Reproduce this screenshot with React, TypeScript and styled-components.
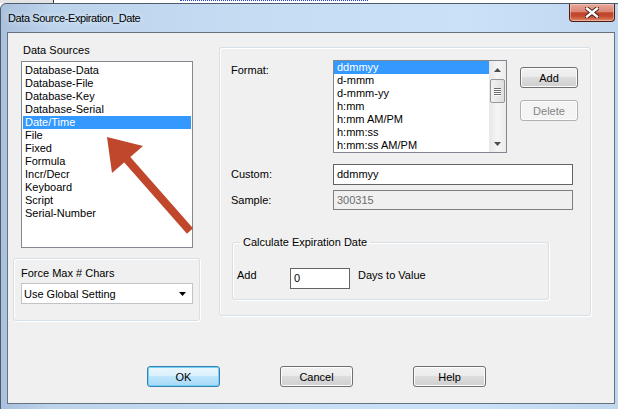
import React from 'react'
import styled, { createGlobalStyle } from 'styled-components'

/**
 * global
 */
const GlobalStyle = createGlobalStyle`
  html, body {
    margin: 0;
    padding: 0;
    background: #fff;
    overflow: hidden;
  }
  body {
    font-family: "Liberation Sans", Arial, sans-serif;
    font-size: 11px;
    color: #000;
  }
`

const UI_FONT = `"Liberation Sans", Arial, sans-serif`

/**
 * styled
 */
const Screen = styled.div`
  position: relative;
  width: 618px;
  height: 409px;
  overflow: hidden;
`

const Backdrop = styled.div`
  display: flex;
  height: 3px;
  background: #fff;
`

const BackdropGrey = styled.div`
  width: 53px;
  background: #e4e4e4;
  border-right: 1px solid #3a3a3a;
`

const BackdropDots = styled.div`
  margin-left: 126px;
  width: 188px;
  border-top: 1px dotted #1b3fd4;
`

const Window = styled.div`
  width: 623px;
  height: 410px;
  box-sizing: border-box;
  border: 1px solid #4f5c6c;
  border-radius: 6px 6px 0 0;
  background: linear-gradient(to right, #a9c1dc 0%, #bcd3ec 8%, #c6dcf3 40%, #cbe1f8 75%, #bfd6ef 100%);
  padding: 0 7px 8px 6px;
  display: flex;
  flex-direction: column;
`

const TitleBar = styled.div`
  height: 28px;
  display: flex;
  justify-content: space-between;
`

const Title = styled.span`
  align-self: center;
  padding-left: 1px;
  font-family: ${UI_FONT};
  font-size: 11px;
  letter-spacing: -0.4px;
  color: #000;
  text-shadow: 0 0 6px rgba(255, 255, 255, 0.9);
`

const CloseButton = styled.div`
  width: 46px;
  height: 18px;
  box-sizing: border-box;
  border: 1px solid #4a1c12;
  border-top: none;
  border-radius: 0 0 4px 4px;
  background: linear-gradient(#e8a898 0%, #d98874 45%, #c2432b 52%, #c54a31 72%, #de8a6b 100%);
  box-shadow: inset 0 0 0 1px rgba(255, 220, 210, 0.5);
  display: flex;
  align-items: center;
  justify-content: center;
`

const Client = styled.div`
  flex: 1;
  border: 1px solid #66727f;
  background: #f0f0f0;
  display: flex;
  flex-direction: column;
`

const MainRow = styled.div`
  display: flex;
  align-items: flex-start;
  gap: 19px;
  padding-left: 5px;
`

const SourcesColumn = styled.div`
  width: 187px;
  margin-top: 11px;
  display: flex;
  flex-direction: column;
`

const Caption = styled.div<{ $indent?: number }>`
  line-height: 13px;
  height: 13px;
  margin-left: ${(p) => p.$indent ?? 0}px;
  white-space: nowrap;
`

const ListBox = styled.div<{ $width: number; $height: number; $padTop?: number }>`
  position: relative;
  width: ${(p) => p.$width}px;
  height: ${(p) => p.$height}px;
  box-sizing: border-box;
  border: 1px solid #828790;
  background: #fff;
  padding: ${(p) => p.$padTop ?? 0}px 1px 0 1px;
  overflow: hidden;
`

const SourceList = styled(ListBox)`
  margin: 4px 0 0 8px;
`

const FormatList = styled(ListBox)`
  display: flex;
  padding: 0;
`

const FormatRows = styled.div`
  flex: 1;
`

const ListItem = styled.div<{ $selected?: boolean }>`
  height: 13px;
  line-height: 13px;
  padding-left: 2px;
  white-space: nowrap;
  background: ${(p) => (p.$selected ? '#3399ff' : 'transparent')};
  color: ${(p) => (p.$selected ? '#fff' : '#000')};
`

const FormatItem = styled(ListItem)`
  padding-left: 3px;
`

const ScrollBar = styled.div`
  width: 17px;
  display: flex;
  flex-direction: column;
  background: linear-gradient(to right, #e7e7e7, #f5f5f5 50%, #ececec);
`

const ScrollArrow = styled.div`
  height: 17px;
  display: flex;
  align-items: center;
  justify-content: center;
`

const ScrollTrack = styled.div`
  flex: 1;
  padding-top: 1px;
`

const ScrollThumb = styled.div`
  margin: 0 1px;
  height: 24px;
  box-sizing: border-box;
  border: 1px solid #979797;
  border-radius: 2px;
  background: linear-gradient(to right, #f2f2f2, #dedede);
  display: flex;
  flex-direction: column;
  align-items: center;
  justify-content: center;
  gap: 1px;
`

const Grip = styled.div`
  width: 7px;
  height: 1px;
  background: #6c6c6c;
  box-shadow: 0 1px 0 #fff;
`

const GroupBox = styled.div`
  box-sizing: border-box;
  border: 1px solid #d5dfe5;
  border-radius: 3px;
  box-shadow: inset 1px 1px 0 #fff, 1px 1px 0 #fff;
`

const ForceGroup = styled(GroupBox)`
  margin-top: 10px;
  width: 187px;
  height: 63px;
  padding: 8px 0 0 7px;
`

const Combo = styled.div`
  margin-top: 3px;
  width: 172px;
  height: 21px;
  box-sizing: border-box;
  border: 1px solid #c3c3c3;
  background: #fff;
  display: flex;
  align-items: center;
  justify-content: space-between;
  padding: 0 6px 0 2px;
`

const SettingsGroup = styled(GroupBox)`
  margin-top: 14px;
  width: 372px;
  height: 269px;
  padding: 12px 0 0 11px;
  display: flex;
  flex-direction: column;
`

const FormatRow = styled.div`
  display: flex;
  align-items: flex-start;
`

const FieldLabel = styled.div<{ $top?: number }>`
  width: 102px;
  line-height: 13px;
  margin-top: ${(p) => p.$top ?? 0}px;
  flex-shrink: 0;
`

const ButtonStack = styled.div`
  margin-left: 13px;
  padding-top: 7px;
  display: flex;
  flex-direction: column;
  gap: 12px;
`

const Button = styled.button<{ $width?: number; $primary?: boolean }>`
  width: ${(p) => p.$width ?? 73}px;
  height: 21px;
  box-sizing: border-box;
  padding: 0;
  font-family: ${UI_FONT};
  font-size: 11px;
  color: #000;
  border: 1px solid ${(p) => (p.$primary ? '#3c7fb1' : '#707070')};
  border-radius: 3px;
  background: ${(p) =>
    p.$primary
      ? 'linear-gradient(#eaf6fd 0%, #d9f0fc 49%, #bee6fd 50%, #a7d9f5 100%)'
      : 'linear-gradient(#f2f2f2 0%, #ebebeb 49%, #dddddd 50%, #cfcfcf 100%)'};
  box-shadow: inset 0 0 0 1px ${(p) => (p.$primary ? '#6fd3f7' : '#fcfcfc')};

  &:disabled {
    border-color: #adb2b5;
    background: #f4f4f4;
    color: #838383;
    box-shadow: inset 0 0 0 1px #fcfcfc;
  }
`

const FieldRow = styled.div<{ $top: number }>`
  display: flex;
  align-items: center;
  margin-top: ${(p) => p.$top}px;
`

const TextBox = styled.div<{ $width: number; $height: number; $disabled?: boolean }>`
  width: ${(p) => p.$width}px;
  height: ${(p) => p.$height}px;
  box-sizing: border-box;
  border: 1px solid ${(p) => (p.$disabled ? '#7f7f7f' : '#646464')};
  background: ${(p) => (p.$disabled ? '#f0f0f0' : '#fff')};
  color: ${(p) => (p.$disabled ? '#6d6d6d' : '#000')};
  padding-left: 3px;
  line-height: ${(p) => p.$height - 2}px;
  white-space: nowrap;
`

const CalcGroup = styled.fieldset`
  margin: 26px 0 0 1px;
  width: 317px;
  height: 64px;
  box-sizing: border-box;
  border: 1px solid #d5dfe5;
  border-radius: 3px;
  box-shadow: inset 1px 1px 0 #fff, 1px 1px 0 #fff;
  padding: 0;
  min-width: 0;
`

const CalcLegend = styled.legend`
  margin-left: 7px;
  padding: 0 3px;
  line-height: 13px;
  font-size: 11px;
`

const CalcRow = styled.div`
  display: flex;
  align-items: flex-start;
  margin-top: 19px;
  padding-left: 4px;
`

const InlineLabel = styled.div<{ $width?: number; $gap?: number }>`
  width: ${(p) => (p.$width ? `${p.$width}px` : 'auto')};
  margin: 1px 0 0 ${(p) => p.$gap ?? 0}px;
  line-height: 13px;
`

const ButtonRow = styled.div`
  margin-top: auto;
  padding: 0 0 16px 139px;
  display: flex;
  gap: 60px;
`

const ArrowOverlay = styled.svg`
  position: absolute;
  left: 0;
  top: 0;
  width: 618px;
  height: 409px;
  pointer-events: none;
`

/**
 * data
 */
const sources = [
  'Database-Data',
  'Database-File',
  'Database-Key',
  'Database-Serial',
  'Date/Time',
  'File',
  'Fixed',
  'Formula',
  'Incr/Decr',
  'Keyboard',
  'Script',
  'Serial-Number',
]

const formats = [
  'ddmmyy',
  'd-mmm',
  'd-mmm-yy',
  'h:mm',
  'h:mm AM/PM',
  'h:mm:ss',
  'h:mm:ss AM/PM',
]

const App: React.FC = () => {
  return (
    <Screen>
      <GlobalStyle />
      <Backdrop>
        <BackdropGrey />
        <BackdropDots />
      </Backdrop>
      <Window>
        <TitleBar>
          <Title>Data Source-Expiration_Date</Title>
          <CloseButton>
            <svg width="14" height="11" viewBox="0 0 14 11">
              <path
                d="M2 1.5 L12 9.5 M12 1.5 L2 9.5"
                stroke="#3a1a12"
                strokeWidth="4.2"
                strokeLinecap="square"
              />
              <path
                d="M2 1.5 L12 9.5 M12 1.5 L2 9.5"
                stroke="#fff"
                strokeWidth="2.4"
                strokeLinecap="square"
              />
            </svg>
          </CloseButton>
        </TitleBar>
        <Client>
          <MainRow>
            <SourcesColumn>
              <Caption $indent={10}>Data Sources</Caption>
              <SourceList $width={172} $height={187} $padTop={2}>
                {sources.map((s) => (
                  <ListItem key={s} $selected={s === 'Date/Time'}>
                    {s}
                  </ListItem>
                ))}
              </SourceList>
              <ForceGroup>
                <Caption>Force Max # Chars</Caption>
                <Combo>
                  <span>Use Global Setting</span>
                  <svg width="7" height="4" viewBox="0 0 7 4">
                    <path d="M0 0 H7 L3.5 4 Z" fill="#000" />
                  </svg>
                </Combo>
              </ForceGroup>
            </SourcesColumn>

            <SettingsGroup>
              <FormatRow>
                <FieldLabel $top={4}>Format:</FieldLabel>
                <FormatList $width={174} $height={93}>
                  <FormatRows>
                    {formats.map((f, i) => (
                      <FormatItem key={f} $selected={i === 0}>
                        {f}
                      </FormatItem>
                    ))}
                  </FormatRows>
                  <ScrollBar>
                    <ScrollArrow>
                      <svg width="7" height="4" viewBox="0 0 7 4">
                        <path d="M3.5 0 L7 4 H0 Z" fill="#4d4d4d" />
                      </svg>
                    </ScrollArrow>
                    <ScrollTrack>
                      <ScrollThumb>
                        <Grip />
                        <Grip />
                        <Grip />
                        <Grip />
                      </ScrollThumb>
                    </ScrollTrack>
                    <ScrollArrow>
                      <svg width="7" height="4" viewBox="0 0 7 4">
                        <path d="M0 0 H7 L3.5 4 Z" fill="#4d4d4d" />
                      </svg>
                    </ScrollArrow>
                  </ScrollBar>
                </FormatList>
                <ButtonStack>
                  <Button $width={58}>Add</Button>
                  <Button $width={58} disabled>
                    Delete
                  </Button>
                </ButtonStack>
              </FormatRow>

              <FieldRow $top={11}>
                <FieldLabel>Custom:</FieldLabel>
                <TextBox $width={240} $height={21}>
                  ddmmyy
                </TextBox>
              </FieldRow>
              <FieldRow $top={5}>
                <FieldLabel>Sample:</FieldLabel>
                <TextBox $width={240} $height={20} $disabled>
                  300315
                </TextBox>
              </FieldRow>

              <CalcGroup>
                <CalcLegend>Calculate Expiration Date</CalcLegend>
                <CalcRow>
                  <InlineLabel $width={53}>Add</InlineLabel>
                  <TextBox $width={60} $height={21}>
                    0
                  </TextBox>
                  <InlineLabel $gap={8}>Days to Value</InlineLabel>
                </CalcRow>
              </CalcGroup>
            </SettingsGroup>
          </MainRow>

          <ButtonRow>
            <Button $primary>OK</Button>
            <Button>Cancel</Button>
            <Button>Help</Button>
          </ButtonRow>
        </Client>
      </Window>

      {/* red annotation arrow drawn over the dialog */}
      <ArrowOverlay viewBox="0 0 618 409">
        <line x1="124" y1="156" x2="190" y2="231" stroke="#c1472c" strokeWidth="8" />
        <polygon points="107,137 143,146 112,173" fill="#c1472c" />
      </ArrowOverlay>
    </Screen>
  )
}

export default App
